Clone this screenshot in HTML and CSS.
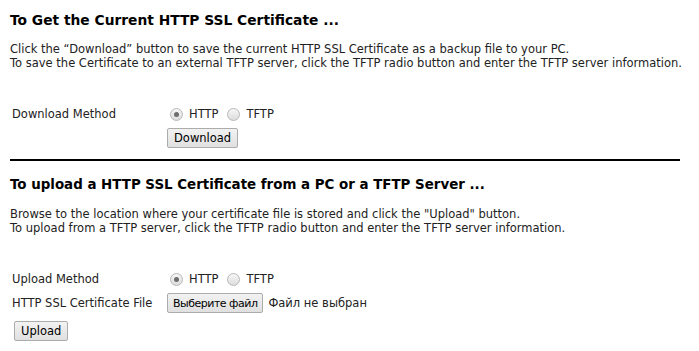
FILE: index.html
```html
<!DOCTYPE html>
<html lang="en">
<head>
    <meta charset="UTF-8">
    <title>HTTP SSL Certificate</title>
    <link rel="stylesheet" href="styles.css">
</head>
<body>
    <div class="section">
        <h2>To Get the Current HTTP SSL Certificate ...</h2>
        <p class="info">Click the &ldquo;Download&rdquo; button to save the current HTTP SSL Certificate as a backup file to your PC.<br>
        To save the Certificate to an external TFTP server, click the TFTP radio button and enter the TFTP server information.</p>

        <div class="form-row first">
            <div class="label">Download Method</div>
            <div class="field">
                <label class="radio"><span class="dot checked"></span>HTTP</label>
                <label class="radio"><span class="dot"></span>TFTP</label>
            </div>
        </div>
        <div class="form-row download-row">
            <div class="label"></div>
            <div class="field"><button class="btn">Download</button></div>
        </div>
    </div>

    <hr class="divider">

    <div class="section second">
        <h2>To upload a HTTP SSL Certificate from a PC or a TFTP Server ...</h2>
        <p class="info">Browse to the location where your certificate file is stored and click the "Upload" button.<br>
        To upload from a TFTP server, click the TFTP radio button and enter the TFTP server information.</p>

        <div class="form-row first">
            <div class="label">Upload Method</div>
            <div class="field">
                <label class="radio"><span class="dot checked"></span>HTTP</label>
                <label class="radio"><span class="dot"></span>TFTP</label>
            </div>
        </div>
        <div class="form-row file-row">
            <div class="label">HTTP SSL Certificate File</div>
            <div class="field">
                <button class="btn choose">Выберите файл</button>
                <span class="file-name">Файл не выбран</span>
            </div>
        </div>
        <div class="form-row upload-row">
            <button class="btn upload">Upload</button>
        </div>
    </div>
</body>
</html>
```

FILE: styles.css
```css
body {
    margin: 0;
    padding: 0 10px;
    font-family: "DejaVu Sans", Verdana, sans-serif;
    font-size: 11.5px;
    color: #222;
    background: #fff;
}
h2 {
    font-size: 13.8px;
    font-weight: bold;
    color: #000;
    margin: 0;
    padding-top: 12px;
    line-height: 16px;
}
.second h2 {
    padding-top: 16px;
    font-size: 13.4px;
}
.info {
    margin: 14px 0 0 0;
    line-height: 14px;
}
.form-row {
    display: flex;
    align-items: center;
    margin-top: 5px;
}
.form-row.first {
    margin-top: 37px;
}
.download-row {
    margin-top: 7px;
}
.file-row {
    margin-top: 7px;
}
.upload-row {
    margin-top: 8px;
}
.label {
    width: 155px;
    padding-left: 2px;
    flex-shrink: 0;
}
.field {
    display: flex;
    align-items: center;
}
.radio {
    display: flex;
    align-items: center;
    margin-right: 6px;
}
.dot {
    width: 13px;
    height: 13px;
    border: 1px solid #b8b8b8;
    border-radius: 50%;
    background: linear-gradient(#f6f6f6, #dddddd);
    margin: 0 6px 0 3px;
    position: relative;
    box-sizing: border-box;
}
.dot.checked::after {
    content: "";
    position: absolute;
    left: 3px;
    top: 3px;
    width: 5px;
    height: 5px;
    border-radius: 50%;
    background: #6e6e6e;
}
.btn {
    font-family: "DejaVu Sans", Tahoma, sans-serif;
    font-size: 11.5px;
    color: #000;
    height: 20px;
    padding: 0 6px;
    border: 1px solid #acacac;
    border-radius: 2px;
    background: linear-gradient(#f2f2f2, #e0e0e0);
}
.btn.choose {
    font-size: 11px;
    letter-spacing: -0.5px;
    padding: 0 5px;
}
.file-name {
    margin-left: 5px;
    font-size: 11.5px;
}
.btn.upload {
    margin-left: 4px;
}
.divider {
    border: 0;
    height: 2px;
    background: #000;
    margin: 11px 9px 0 0;
}
```
